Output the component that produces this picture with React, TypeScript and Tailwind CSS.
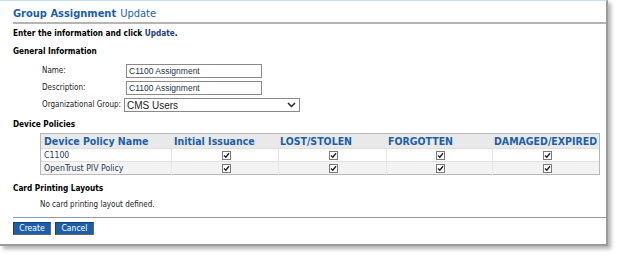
import React from "react";

const CheckBox = () => (
  <span className="inline-flex h-[9px] w-[9px] items-center justify-center border border-[#7a7a7a] bg-white">
    <svg width="7" height="7" viewBox="0 0 7 7">
      <path d="M1 3.5 L2.8 5.3 L6 1.2" fill="none" stroke="#222" strokeWidth="1.4" />
    </svg>
  </span>
);

export default function App() {
  const rows = ["C1100", "OpenTrust PIV Policy"];
  const tahoma = { fontFamily: '"DejaVu Sans Condensed", "DejaVu Sans", sans-serif' };
  const arial = { fontFamily: '"Liberation Sans", Arial, sans-serif' };
  return (
    <div className="h-[255px] w-[617px] bg-white">
      <div
        className="flex h-[246px] w-[608px] flex-col border-t border-r-2 border-b-2 border-t-[#c8ddf2] border-r-[#9b9b9b] border-b-[#9b9b9b] bg-white shadow-[3px_3px_4px_rgba(0,0,0,0.3)]"
        style={tahoma}
      >
        <div className="flex h-[20px] items-end pl-[13px] text-[11px] leading-[14px] text-[#1b5fab]">
          <span className="font-bold">Group Assignment</span>
          <span className="ml-[4px]">Update</span>
        </div>
        <div className="ml-[13px] mt-[1px] h-[2px] bg-[#b4b4b4]" />
        <div className="ml-[13px] mt-[4px] text-[8.2px] leading-[11px] font-bold text-black">
          Enter the information and click <span className="text-[#1f3f7a]">Update</span>.
        </div>
        <div className="ml-[13px] mt-[7px] text-[8.2px] leading-[11px] font-bold text-black">General Information</div>
        <div className="ml-[42px] mt-[7px] flex flex-col gap-[3px] text-[8px] text-[#222]">
          <div className="flex h-[14px] items-center">
            <span className="w-[84px]">Name:</span>
            <div className="flex h-[14px] w-[136px] items-center border border-[#8a8a8a] px-[2px] text-[8.5px] text-[#2a3340]" style={arial}>
              C1100 Assignment
            </div>
          </div>
          <div className="flex h-[14px] items-center">
            <span className="w-[84px]">Description:</span>
            <div className="flex h-[14px] w-[136px] items-center border border-[#8a8a8a] px-[2px] text-[8.5px] text-[#2a3340]" style={arial}>
              C1100 Assignment
            </div>
          </div>
          <div className="flex h-[14px] items-center">
            <span className="w-[82px]">Organizational Group:</span>
            <div className="flex h-[14px] w-[176px] items-center justify-between border border-[#8a8a8a] pr-[3px] pl-[2px] text-[10px] text-[#222]" style={arial}>
              <span>CMS Users</span>
              <svg width="9" height="6" viewBox="0 0 9 6">
                <path d="M1 1 L4.5 4.5 L8 1" fill="none" stroke="#222" strokeWidth="1.5" />
              </svg>
            </div>
          </div>
        </div>
        <div className="ml-[13px] mt-[7px] text-[8.2px] leading-[11px] font-bold text-black">Device Policies</div>
        <div className="ml-[40px] mt-[3px] w-[560px] border border-[#b8b8b8]">
          <div className="grid h-[14px] grid-cols-[130px_107px_108px_106px_1fr] items-center bg-[#e9e9e9] text-[10.5px] font-bold text-[#1b5fab]">
            <div className="pl-[3px]">Device Policy Name</div>
            <div className="pl-[3px]">Initial Issuance</div>
            <div className="pl-[2px]">LOST/STOLEN</div>
            <div className="pl-[2px]">FORGOTTEN</div>
            <div className="pl-[2px]">DAMAGED/EXPIRED</div>
          </div>
          {rows.map((r, i) => (
            <div
              key={r}
              className={`grid h-[13px] grid-cols-[130px_107px_108px_106px_1fr] items-center border-t border-[#e0e0e0] text-[8.7px] text-[#2a3a55] ${i === 1 ? "bg-[#f3f3f3]" : "bg-white"}`}
            >
              <div className="pl-[3px]">{r}</div>
              {[0, 1, 2, 3].map((c) => (
                <div key={c} className="flex h-full items-center justify-center border-l border-[#e6e6e6] pl-[2px]">
                  <CheckBox />
                </div>
              ))}
            </div>
          ))}
        </div>
        <div className="ml-[13px] mt-[8px] text-[8.2px] leading-[11px] font-bold text-black">Card Printing Layouts</div>
        <div className="ml-[40px] mt-[5px] text-[8px] leading-[11px] text-[#222]">No card printing layout defined.</div>
        <div className="ml-[13px] mt-[7px] h-px bg-[#9a9a9a]" />
        <div className="ml-[13px] mt-[4px] flex gap-[4px]">
          <button className="h-[13px] w-[38px] border border-[#0d3f7a] border-r-[#666] border-b-[#666] bg-[#1d5ea8] text-[8.5px] leading-[11px] text-white">
            Create
          </button>
          <button className="h-[13px] w-[39px] border border-[#0d3f7a] border-r-[#666] border-b-[#666] bg-[#1d5ea8] text-[8.5px] leading-[11px] text-white">
            Cancel
          </button>
        </div>
      </div>
    </div>
  );
}
